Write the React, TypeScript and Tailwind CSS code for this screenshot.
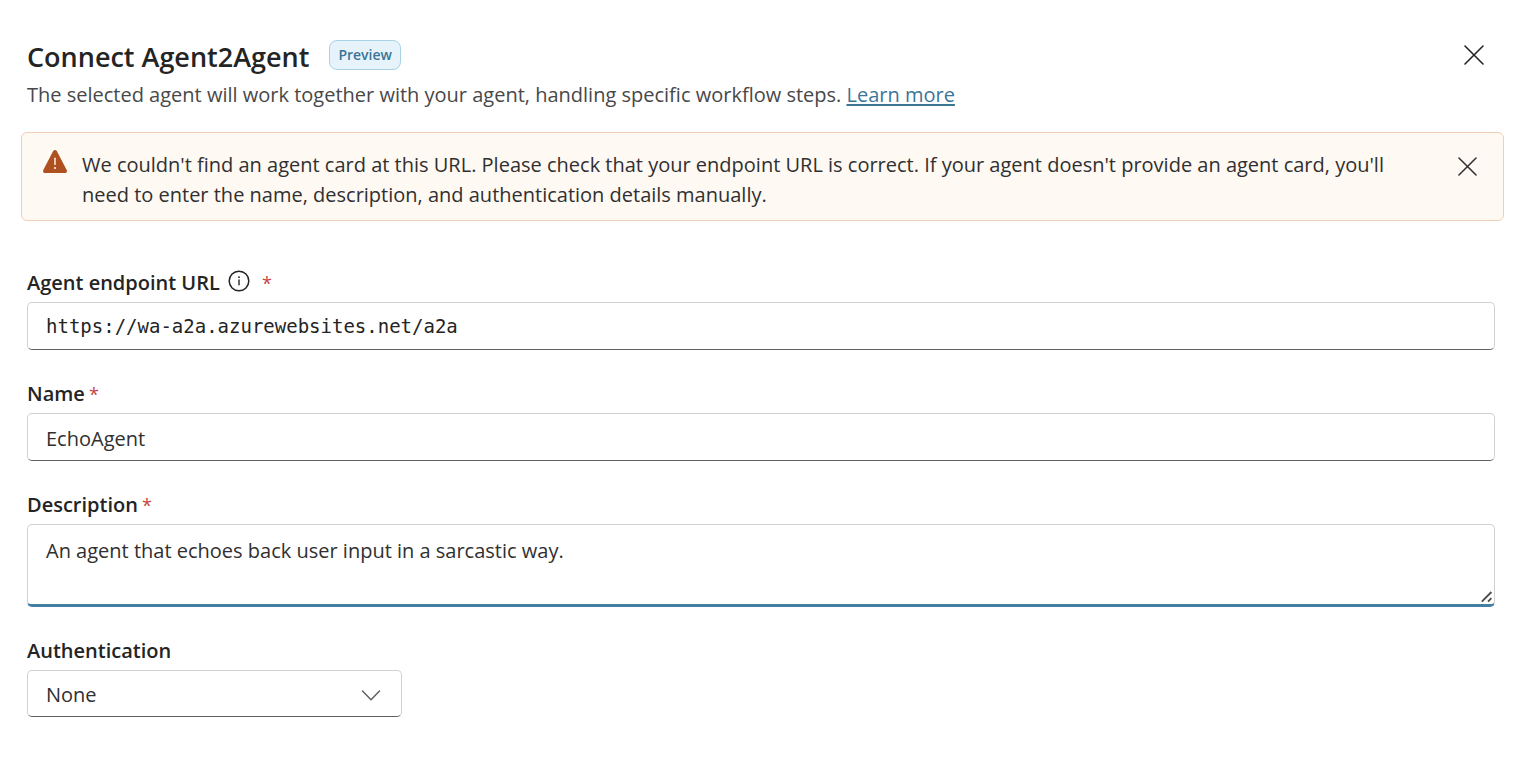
import { useState } from "react";
import type { ReactNode } from "react";

const fieldBox =
  "block w-full rounded-[5px] border border-[#d1d1d1] bg-white px-[18px] outline-none";
const lineField = "border-b-[#616161]";

function CloseIcon({ className }: { className: string }) {
  return (
    <svg viewBox="0 0 20 20" className={className} fill="none" stroke="currentColor" aria-hidden="true">
      <path d="M1 1L19 19M19 1L1 19" strokeWidth="1.6" strokeLinecap="round" />
    </svg>
  );
}

function WarningIcon() {
  return (
    <svg viewBox="0 0 24 23" className="h-[23px] w-6 shrink-0" aria-hidden="true">
      <path
        d="M10.2 1.1C11 -0.3 13 -0.3 13.8 1.1L23.7 19.9C24.4 21.3 23.5 23 21.9 23H2.1C0.5 23 -0.4 21.3 0.3 19.9Z"
        fill="#ae5020"
      />
      <path d="M12 8.2V14.4" stroke="#fff9f3" strokeWidth="1.4" strokeLinecap="round" />
      <circle cx="12" cy="18" r="1.1" fill="#fff9f3" />
    </svg>
  );
}

function InfoIcon() {
  return (
    <svg viewBox="0 0 22 22" className="size-[22px]" fill="none" stroke="currentColor" aria-hidden="true">
      <circle cx="11" cy="11" r="9.8" strokeWidth="1.5" />
      <path d="M11 10V14.8" strokeWidth="1.4" strokeLinecap="round" />
      <circle cx="11" cy="7.2" r="0.9" fill="currentColor" stroke="none" />
    </svg>
  );
}

function Required() {
  return (
    <span className="text-[18px] text-[#c4453f]" aria-hidden="true">
      *
    </span>
  );
}

function FieldLabel({ htmlFor, children }: { htmlFor: string; children: ReactNode }) {
  return (
    <label htmlFor={htmlFor} className="font-semibold">
      {children}
    </label>
  );
}

export default function App() {
  const [warning, setWarning] = useState(true);
  const [url, setUrl] = useState("https://wa-a2a.azurewebsites.net/a2a");
  const [name, setName] = useState("EchoAgent");
  const [description, setDescription] = useState("An agent that echoes back user input in a sarcastic way.");

  return (
    <main className="min-h-screen bg-white pt-10 pb-10 font-['Open_Sans','Noto_Sans',sans-serif] text-[20px] leading-[30px] text-[#242424]">
      <header className="flex items-start justify-between pr-[25px] pl-[27px]">
        <div>
          <div className="flex items-start gap-5">
            <h1 className="text-[27px] leading-[34px] font-semibold">Connect Agent2Agent</h1>
            <span className="flex h-[30px] items-center rounded-lg border border-[#a9d3e5] bg-[#e6f3fb] px-2 text-[14px] leading-7 font-semibold text-[#3b7596]">
              Preview
            </span>
          </div>
          <p className="mt-[6px] text-[#484848]">
            The selected agent will work together with your agent, handling specific workflow steps.{" "}
            <a href="#learn-more" className="text-[#3b7596] underline underline-offset-2">
              Learn more
            </a>
          </p>
        </div>
        <button type="button" aria-label="Close" className="p-[5px]">
          <CloseIcon className="size-5" />
        </button>
      </header>

      {warning && (
        <div
          role="alert"
          className="mt-[22px] mr-[10px] ml-[21px] flex items-start rounded-md border border-[#f0cfb8] bg-[#fff9f3] pt-[17px] pr-[26px] pb-[10px] pl-[21px] text-[#303030]"
        >
          <WarningIcon />
          <p className="ml-[15px] flex-1 pr-[60px]">
            We couldn't find an agent card at this URL. Please check that your endpoint URL is correct. If your agent
            doesn't provide an agent card, you'll need to enter the name, description, and authentication details
            manually.
          </p>
          <button type="button" aria-label="Dismiss warning" className="mt-[7px]" onClick={() => setWarning(false)}>
            <CloseIcon className="size-[19px]" />
          </button>
        </div>
      )}

      <form className="mt-[47px] flex flex-col gap-[29px] pr-[19px] pl-[27px]">
        <div className="flex flex-col gap-1">
          <div className="flex items-center">
            <FieldLabel htmlFor="endpoint">Agent endpoint URL</FieldLabel>
            <button type="button" aria-label="About the endpoint URL" className="mr-3 mb-1 ml-2">
              <InfoIcon />
            </button>
            <Required />
          </div>
          <input
            id="endpoint"
            type="url"
            required
            value={url}
            onChange={(e) => setUrl(e.target.value)}
            className={`${fieldBox} ${lineField} h-12 font-['DejaVu_Sans_Mono',monospace] text-[19px] text-[#242424]`}
          />
        </div>

        <div className="flex flex-col gap-1">
          <div className="flex gap-1">
            <FieldLabel htmlFor="name">Name</FieldLabel>
            <Required />
          </div>
          <input
            id="name"
            type="text"
            required
            value={name}
            onChange={(e) => setName(e.target.value)}
            className={`${fieldBox} ${lineField} h-12 pt-[2px] text-[#303030]`}
          />
        </div>

        <div className="flex flex-col gap-1">
          <div className="flex gap-1">
            <FieldLabel htmlFor="description">Description</FieldLabel>
            <Required />
          </div>
          <div className="relative">
            <textarea
              id="description"
              required
              rows={2}
              value={description}
              onChange={(e) => setDescription(e.target.value)}
              className={`${fieldBox} h-[83px] resize-y border-b-[3px] border-b-[#437fa5] pt-[11px] text-[#303030] [&::-webkit-resizer]:bg-transparent`}
            />
            <svg
              viewBox="0 0 12 12"
              className="pointer-events-none absolute right-[2px] bottom-1 size-3 text-[#4a4a4a]"
              fill="none"
              stroke="currentColor"
              aria-hidden="true"
            >
              <path d="M0.8 10.6L10.4 1M7 10.6L10.4 7.2" strokeWidth="1.8" />
            </svg>
          </div>
        </div>

        <div className="flex flex-col gap-1">
          <FieldLabel htmlFor="authentication">Authentication</FieldLabel>
          <div className="relative w-[375px] max-w-full">
            <select
              id="authentication"
              defaultValue="None"
              className={`${fieldBox} ${lineField} h-[47px] appearance-none pt-[3px] text-[#303030]`}
            >
              <option>None</option>
            </select>
            <svg
              viewBox="0 0 20 12"
              className="pointer-events-none absolute top-[19px] right-[21px] h-3 w-5 text-[#616161]"
              fill="none"
              stroke="currentColor"
              aria-hidden="true"
            >
              <path d="M1.5 2L10 10.7L18.5 2" strokeWidth="1.5" strokeLinecap="round" strokeLinejoin="round" />
            </svg>
          </div>
        </div>
      </form>
    </main>
  );
}
